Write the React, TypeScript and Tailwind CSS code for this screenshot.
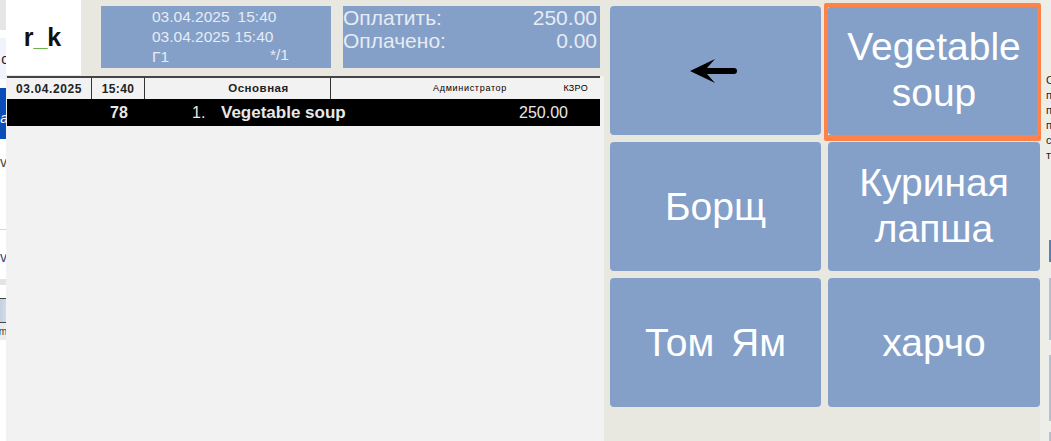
const font = { fontFamily: '"Liberation Sans", Arial, sans-serif' };

function LeftStrip() {
  return (
    <div className="flex h-full w-[6px] shrink-0 flex-col overflow-hidden bg-white text-[14px] leading-none text-[#222]">
      <div className="h-[30px] bg-[#e6e6e6]" />
      <div className="h-[8px] bg-white" />
      <div className="flex h-[41px] items-center justify-end bg-[#f0f4fa]">
        <span className="-mr-[3px]">о</span>
      </div>
      <div className="h-[9px] bg-white" />
      <div className="flex h-[51px] items-end justify-end bg-[#0b4db8] pb-[14px] text-white italic">
        <span className="-mr-[2px]">a</span>
      </div>
      <div className="flex h-[91px] items-start justify-end border-b border-[#d8d8d8] pt-[16px] text-[#444]">
        <span className="-mr-[1px]">v</span>
      </div>
      <div className="flex h-[49px] items-start justify-end pt-[20px] text-[#2c4a7a]">
        <span className="-mr-[1px]">v</span>
      </div>
      <div className="h-[6px] bg-[#e4e4e4]" />
      <div className="h-[13px] bg-white" />
      <div className="h-[25px] border-y border-[#444] bg-gradient-to-r from-[#c4d0e0] to-[#d2dbe8]" />
      <div className="flex h-[17px] items-center justify-end bg-[#ececec] text-[10px] text-[#444]">
        <span className="-mr-[1px]">m</span>
      </div>
      <div className="flex-1 bg-white" />
    </div>
  );
}

function InfoPanels() {
  return (
    <div className="flex h-[76px] shrink-0">
      <div className="flex h-[75px] w-[75px] items-center justify-center bg-white pr-[2px] text-[25px] font-bold text-[#111]">
        <span>r</span>
        <span className="text-[#6ab04c]">_</span>
        <span>k</span>
      </div>
      <div className="ml-[20px] mt-[6px] flex h-[62px] w-[230px] flex-col bg-[#84a0c8] pl-[51px] pt-[1px] text-[15.5px] leading-[20px] text-[#e6ecf4]">
        <div className="flex gap-[8px]">
          <span>03.04.2025</span>
          <span>15:40</span>
        </div>
        <div className="flex gap-[5px]">
          <span>03.04.2025</span>
          <span>15:40</span>
        </div>
        <div className="flex justify-between pr-[42px]">
          <span>Г1</span>
          <span className="-mt-[2px]">*/1</span>
        </div>
      </div>
      <div className="ml-[12px] mt-[6px] h-[62px] w-[257px] bg-[#84a0c8] pr-[3px] text-[21px] leading-[23px] text-[#e6ecf4]">
        <div className="flex justify-between">
          <span>Оплатить:</span>
          <span>250.00</span>
        </div>
        <div className="flex justify-between">
          <span>Оплачено:</span>
          <span>0.00</span>
        </div>
      </div>
    </div>
  );
}

function OrderList() {
  return (
    <div className="flex min-h-0 flex-1 flex-col bg-[#f2f2f2] pl-[1px] pr-[4px]">
      <div className="flex h-[23px] shrink-0 items-center border-t-2 border-[#444] text-[12px] font-bold leading-none text-[#222]">
        <div className="flex h-full w-[85px] items-center justify-center border-r border-[#333] tracking-[0.6px]">03.04.2025</div>
        <div className="flex h-full w-[53px] items-center justify-center border-r border-[#333] tracking-[0.4px]">15:40</div>
        <div className="flex h-full w-[186px] items-center justify-center border-r border-[#333] pl-[42px] text-[11.5px] tracking-[0.5px]">Основная</div>
        <div className="pl-[102px] text-[9px] font-normal tracking-[0.7px] text-black">Администратор</div>
        <div className="ml-auto pr-[12px] text-[9px] font-normal tracking-[0.3px] text-black">КЗРО</div>
      </div>
      <div className="flex h-[27px] shrink-0 items-center bg-black text-[16px] font-bold text-[#e8e8e8]">
        <span className="ml-[103px] w-[82px]">78</span>
        <span className="w-[29px] font-normal">1.</span>
        <span className="text-[17px]">Vegetable soup</span>
        <span className="ml-auto pr-[32px] font-normal">250.00</span>
      </div>
    </div>
  );
}

function Tile({ children, selected, lift }: { children: React.ReactNode; selected?: boolean; lift?: boolean }) {
  return (
    <button
      className={`relative flex items-center justify-center rounded-[4px] bg-[#84a0c8] px-[8px] text-center text-[39px] leading-[46px] text-white ${
        lift ? "pb-[2px]" : ""
      }`}
    >
      <span className="block">{children}</span>
      {selected && (
        <span className="absolute -bottom-[6px] -left-[4px] -right-[1px] -top-[3px] rounded-[2px] border-b-[6px] border-l-[4px] border-r-[4px] border-t-[4px] border-[#ff8248]" />
      )}
    </button>
  );
}

function ArrowIcon() {
  return (
    <svg width="47" height="24" viewBox="0 0 47 24" aria-hidden="true" className="mr-[4px]">
      <path d="M0 12 L25 0 L17 9 H44 a3 3 0 0 1 0 6 H17 L25 24 Z" fill="#000" />
    </svg>
  );
}

export default function App() {
  return (
    <div className="flex h-[441px] w-[1051px] overflow-hidden bg-white" style={font}>
      <LeftStrip />
      <div className="flex h-full w-[1034px] shrink-0 bg-[#e8e8e0]">
        <div className="flex h-full w-[598px] shrink-0 flex-col">
          <InfoPanels />
          <OrderList />
        </div>
        <div className="grid flex-1 grid-cols-[211px_212px] grid-rows-[129px_129px_129px] content-start gap-x-[7px] gap-y-[7px] pl-[6px] pt-[6px]">
          <Tile>
            <span className="flex justify-center">
              <ArrowIcon />
            </span>
          </Tile>
          <Tile selected lift>
            Vegetable
            <br />
            soup
          </Tile>
          <Tile>Борщ</Tile>
          <Tile lift>
            Куриная
            <br />
            лапша
          </Tile>
          <Tile>
            <span className="[word-spacing:6px]">Том Ям</span>
          </Tile>
          <Tile>харчо</Tile>
        </div>
      </div>
      <div className="flex h-full w-[11px] shrink-0 bg-[#eeeee8]">
        <div className="w-[9px] pl-[6px] pt-[73px] text-[11px] leading-[15px] text-[#222]">
          <div>С</div>
          <div>п</div>
          <div>п</div>
          <div>п</div>
          <div>с</div>
          <div>т</div>
        </div>
        <div className="flex w-[2px] flex-col">
          <div className="mt-[240px] h-[22px] bg-[#5a7fb5]" />
          <div className="mt-[16px] h-[62px] bg-[#b4c0d4]" />
          <div className="mt-[15px] h-[66px] bg-[#b4c0d4]" />
          <div className="mt-[11px] flex-1 bg-[#b4c0d4]" />
        </div>
      </div>
    </div>
  );
}
